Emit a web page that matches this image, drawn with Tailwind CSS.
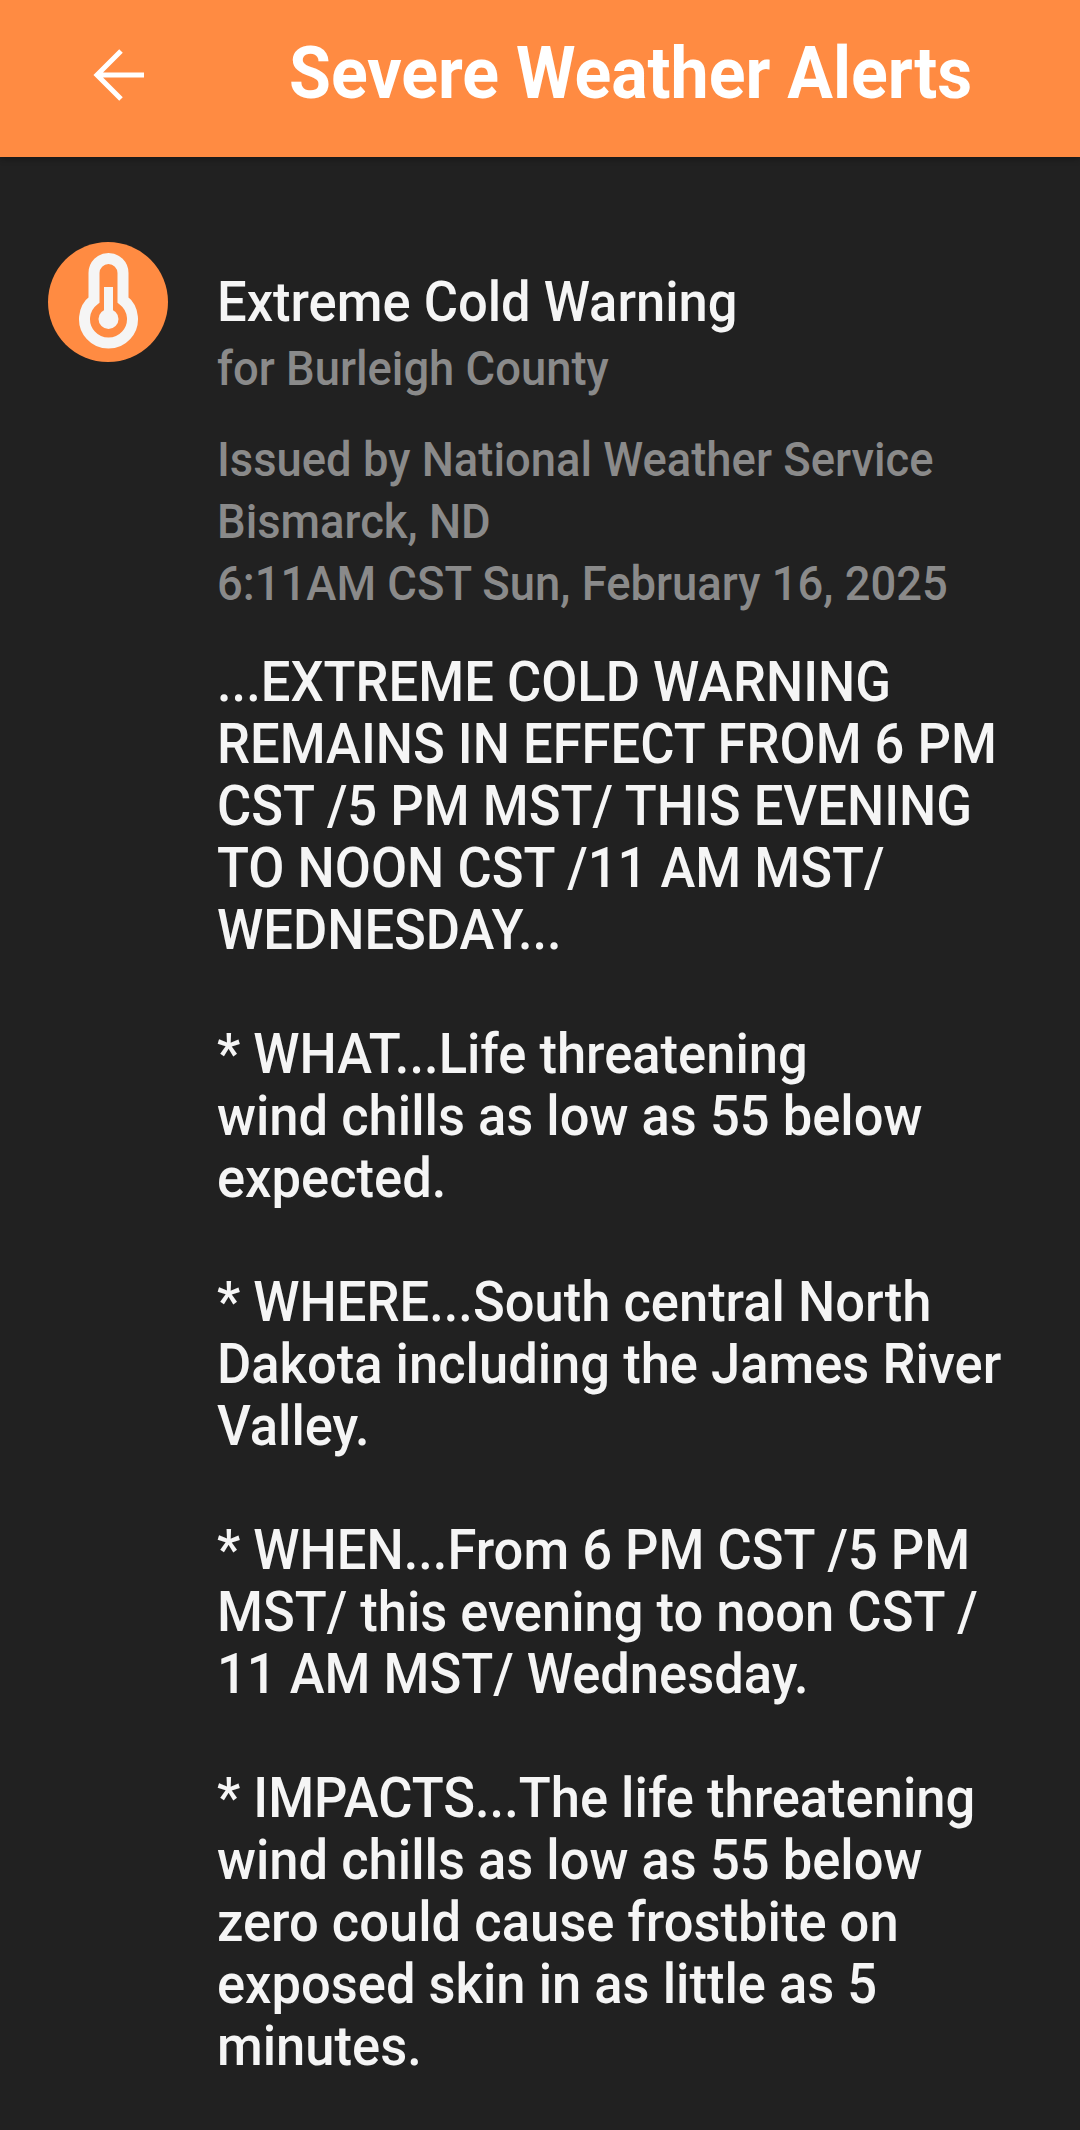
<!DOCTYPE html>
<html lang="en">
<head>
  <meta charset="UTF-8" />
  <title>Severe Weather Alerts</title>
  <meta name="viewport" content="width=device-width, initial-scale=1.0" />
  <script src="https://cdn.jsdelivr.net/npm/@tailwindcss/browser@4"></script>
</head>
<body class="h-[2130px] overflow-hidden bg-[#212121] font-['Roboto',sans-serif] text-[#f5f5f5]">
  <header class="flex h-[157px] items-center bg-[#ff8b42] shadow-[0_2px_6px_rgba(0,0,0,0.3)]">
    <svg class="mb-[7px] ml-[90px] h-[60px] w-[60px] shrink-0" viewBox="0 0 60 60" fill="none" stroke="#ffffff" stroke-width="5">
      <path d="M54 30H8M31 6L7 30L31 54" />
    </svg>
    <h1 class="mb-[10px] ml-[139px] origin-left scale-x-[0.945] text-[72px] leading-none font-bold whitespace-nowrap text-white">Severe Weather Alerts</h1>
  </header>

  <main class="flex pt-[85px]">
    <div class="ml-[48px] flex h-[120px] w-[120px] shrink-0 items-center justify-center rounded-full bg-[#ff8b42]">
      <svg class="h-[120px] w-[120px]" viewBox="0 0 120 120" fill="none">
        <path d="M46 58V31a14.5 14.5 0 0 1 29 0V58a24 24 0 1 1 -29 0Z" stroke="#f5f5f5" stroke-width="11" />
        <path d="M56 45H65V80H56Z" fill="#f5f5f5" />
        <circle cx="60.5" cy="77" r="10" fill="#f5f5f5" />
      </svg>
    </div>

    <div class="ml-[49px] origin-left scale-x-[0.9375] pt-[27px] font-medium whitespace-nowrap">
      <h2 class="text-[56px] leading-[66px]">Extreme Cold Warning</h2>
      <p class="mt-[1px] text-[48.4px] leading-[66px] text-[#8a8a8a]">for Burleigh County</p>
      <p class="mt-[27px] text-[48.4px] leading-[62px] text-[#8a8a8a]">
        Issued by National Weather Service<br />
        Bismarck, ND<br />
        6:11AM CST Sun, February 16, 2025
      </p>
      <p class="mt-[36px] text-[56px] leading-[62px]">
        ...EXTREME COLD WARNING<br />
        REMAINS IN EFFECT FROM 6 PM<br />
        CST /5 PM MST/ THIS EVENING<br />
        TO NOON CST /11 AM MST/<br />
        WEDNESDAY...<br />
        <br />
        * WHAT...Life threatening<br />
        wind chills as low as 55 below<br />
        expected.<br />
        <br />
        * WHERE...South central North<br />
        Dakota including the James River<br />
        Valley.<br />
        <br />
        * WHEN...From 6 PM CST /5 PM<br />
        MST/ this evening to noon CST /<br />
        11 AM MST/ Wednesday.<br />
        <br />
        * IMPACTS...The life threatening<br />
        wind chills as low as 55 below<br />
        zero could cause frostbite on<br />
        exposed skin in as little as 5<br />
        minutes.
      </p>
    </div>
  </main>
</body>
</html>
